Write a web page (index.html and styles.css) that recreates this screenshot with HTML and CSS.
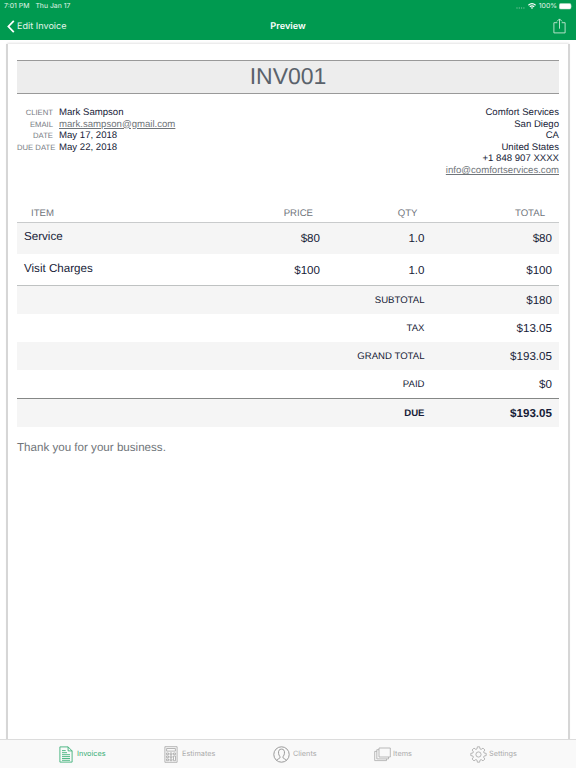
FILE: index.html
```html
<!DOCTYPE html>
<html lang="en">
<head>
<meta charset="utf-8">
<title>Preview</title>
<link rel="stylesheet" href="styles.css">
</head>
<body>
<header class="top">
  <div class="status">
    <div class="status-left"><span class="time">7:01 PM</span><span class="day">Thu Jan 17</span></div>
    <div class="status-right">
      <svg class="dots" width="9" height="2" viewBox="0 0 9 2" fill="#6dc298"><circle cx="1" cy="1" r=".65"/><circle cx="3.3" cy="1" r=".65"/><circle cx="5.6" cy="1" r=".65"/><circle cx="7.9" cy="1" r=".65"/></svg>
      <svg class="wifi" width="8" height="6" viewBox="0 0 8 6" fill="none" stroke="#fff" stroke-width="1.2"><path d="M.4 2.3Q4-.9 7.6 2.3M1.8 3.8Q4 1.9 6.2 3.8"/><path d="M2.8 4.7Q4 3.8 5.2 4.7L4 6z" fill="#fff" stroke="none"/></svg>
      <span class="percent">100%</span>
      <svg class="battery" width="14" height="7" viewBox="0 0 14 7"><rect x=".3" y=".5" width="11.7" height="5.6" rx="1.4" fill="#fff" stroke="#a9dcc1" stroke-width=".5"/><path d="M12.7 2.3q1 1 0 2z" fill="#a9dcc1"/></svg>
    </div>
  </div>
  <nav class="nav">
    <a class="back"><svg width="8" height="13" viewBox="0 0 8 13" fill="none" stroke="#fff" stroke-width="1.8"><path d="M6.8.8 1.4 6.5l5.4 5.7"/></svg><span>Edit Invoice</span></a>
    <h1>Preview</h1>
    <svg class="share" width="13" height="16" viewBox="0 0 13 16" fill="none" stroke="#c5e8d4" stroke-width=".9"><path d="M4.3 4.7H.9v10.2h11.2V4.7H8.7M6.5 10.7V1M4 3.4 6.5.9 9 3.4"/></svg>
  </nav>
</header>

<main class="page">
  <article class="paper">
    <h2 class="number">INV001</h2>
    <section class="info">
      <dl class="client">
        <dt>CLIENT</dt><dd>Mark Sampson</dd>
        <dt>EMAIL</dt><dd><a>mark.sampson@gmail.com</a></dd>
        <dt>DATE</dt><dd>May 17, 2018</dd>
        <dt class="wide">DUE DATE</dt><dd>May 22, 2018</dd>
      </dl>
      <address class="company">
        <div>Comfort Services</div><div>San Diego</div><div>CA</div><div>United States</div><div>+1 848 907 XXXX</div><div><a>info@comfortservices.com</a></div>
      </address>
    </section>
    <section class="items">
      <div class="row head"><span>ITEM</span><span>PRICE</span><span>QTY</span><span>TOTAL</span></div>
      <div class="row shade"><span class="name">Service</span><span>$80</span><span>1.0</span><span>$80</span></div>
      <div class="row last"><span class="name">Visit Charges</span><span>$100</span><span>1.0</span><span>$100</span></div>
    </section>
    <section class="totals">
      <div class="sum shade"><span class="label">SUBTOTAL</span><span>$180</span></div>
      <div class="sum"><span class="label">TAX</span><span>$13.05</span></div>
      <div class="sum shade"><span class="label">GRAND TOTAL</span><span>$193.05</span></div>
      <div class="sum"><span class="label">PAID</span><span>$0</span></div>
      <div class="sum shade due"><span class="label">DUE</span><span>$193.05</span></div>
    </section>
    <p class="note">Thank you for your business.</p>
  </article>
</main>

<footer class="tabs">
  <a class="tab active"><svg width="14" height="17" viewBox="0 0 14 17" fill="none" stroke="currentColor" stroke-width=".85"><path d="M.9.9h8.2l4 4v11.2H.9zM9.1.9v4h4M3 4.6h3.7M3 6.7h5M3 8.7h8M3 10.6h8M3 12.5h8M3 14.3h8"/></svg><span>Invoices</span></a>
  <a class="tab"><svg width="14" height="17" viewBox="0 0 14 17" fill="none" stroke="currentColor" stroke-width=".85"><path d="M.9.7h12.2v15.6H.9zM2.6 2.5h8.8v2.6H2.6zM2.5 7h2v1.7h-2zM6 7h2v1.7H6zM9.5 7h2v1.7h-2zM2.5 10h2v1.7h-2zM6 10h2v1.7H6zM9.5 10h2v4.7h-2zM2.5 13h2v1.7h-2zM6 13h2v1.7H6z"/></svg><span>Estimates</span></a>
  <a class="tab clients"><svg width="17" height="17" viewBox="0 0 17 17" fill="none" stroke="#8e8e8e" stroke-width=".9"><circle cx="8.5" cy="8.5" r="7.7"/><path d="M3.7 14.3c.5-1.5 3.4-1.4 3.4-3.1 0-.8-1.2-1.5-1.5-3.6C5.2 4.7 6.2 3.1 8.5 3.1s3.3 1.6 2.9 4.5c-.3 2.1-1.5 2.8-1.5 3.6 0 1.7 2.9 1.6 3.4 3.1"/></svg><span>Clients</span></a>
  <a class="tab tight"><svg width="17" height="15" viewBox="0 0 17 15" fill="none" stroke="currentColor" stroke-width=".8"><path d="M5 1h11.3v9H5zM5 2.7H2.8v9.2h11.7V10M2.8 4.4H.7v9.2h11.8v-1.7"/></svg><span>Items</span></a>
  <a class="tab tight"><svg width="17" height="17" viewBox="0 0 17 17" fill="none" stroke="currentColor" stroke-width=".85" stroke-linejoin="round"><circle cx="8.5" cy="8.5" r="2.6"/><path d="M7.4.8h2.2l.4 2.1 1.2.5L13 2.1 14.9 4l-1.3 1.8.5 1.2 2.1.4v2.2l-2.1.4-.5 1.2 1.3 1.8-1.9 1.9-1.8-1.3-1.2.5-.4 2.1H7.4L7 14.1l-1.2-.5L4 14.9 2.1 13l1.3-1.8-.5-1.2-2.1-.4V7.4L2.9 7l.5-1.2L2.1 4 4 2.1l1.8 1.3L7 2.9z"/></svg><span>Settings</span></a>
</footer>
</body>
</html>
```
FILE: styles.css
```css
* { box-sizing: border-box; margin: 0; padding: 0; }
body { width: 576px; height: 768px; display: flex; flex-direction: column; overflow: hidden; background: #fff; font-family: "Liberation Sans", Arial, sans-serif; color: #171c38; text-rendering: geometricPrecision; }
svg { display: block; flex: none; }

.top { height: 40px; background: #009a50; color: #fff; font-family: Inter, sans-serif; }
.status { height: 12px; display: flex; justify-content: space-between; padding: 0 3px 0 4px; font-size: 6.9px; line-height: 12px; color: #e4f5eb; }
.status-left { display: flex; gap: 6px; }
.status-right { display: flex; align-items: center; }
.dots { margin: 4px 3px 0 0; }
.wifi { margin-right: 3px; }
.percent { margin-right: 2px; }
.nav { height: 28px; display: grid; grid-template-columns: 1fr auto 1fr; align-items: center; padding: 0 9px 0 10px; }
.back { display: flex; align-items: center; gap: 2px; margin-left: -3px; font-size: 9.1px; line-height: 12px; color: #e4f5eb; }
.back span { padding-top: 1px; }
.nav h1 { padding: 1px 1px 0 0; font-size: 9.2px; font-weight: 600; line-height: 12px; }
.share { justify-self: end; margin-right: 1px; }

.page { flex: 1; min-height: 0; padding: 4px 8px 0; overflow: hidden; }
.paper { height: 720px; padding: 16px 9px 0; background: #fff; box-shadow: -2px 0 0 #d6d6d6, 2px 0 0 #d6d6d6, 0 0 2px 1px #e4e4e4; }
.number { height: 34px; border-top: 1px solid #999; border-bottom: 1px solid #999; background: #ededed; color: #5a626b; font-size: 23px; font-weight: 400; line-height: 31px; text-align: center; }
.info { height: 110px; display: flex; justify-content: space-between; padding-top: 13px; font-size: 9.6px; line-height: 11.6px; }
.client { display: grid; grid-template-columns: 38px auto; grid-auto-rows: 11.6px; column-gap: 4px; align-content: start; }
.client dt { padding-right: 2px; font-size: 7.7px; color: #777b83; text-align: right; white-space: nowrap; line-height: 12.6px; }
.client .wide { padding-right: 0; }
.info a { color: #70757a; text-decoration: underline; }
.company { font-style: normal; text-align: right; }

.row { height: 31px; display: grid; grid-template-columns: 210px 93px 104.5px 127.5px; align-items: center; font-size: 11.6px; text-align: right; }
.row .name { padding-left: 7px; margin-top: -4px; text-align: left; }
.head { height: 19px; border-bottom: 1px solid #c9cbcc; font-size: 9.6px; color: #70757c; }
.row.head span { padding-right: 7px; }
.row.head span:first-child { padding-left: 14px; text-align: left; }
.row.last { height: 32px; padding-top: 1px; border-bottom: 1px solid #bfc2c2; }
.shade { background: #f5f5f5; }
.sum { height: 28px; display: grid; grid-template-columns: 407.5px 127.5px; align-items: center; font-size: 11.6px; text-align: right; }
.label { font-size: 9.6px; }
.due { height: 29px; border-top: 1px solid #858786; font-weight: 700; }
.note { margin-top: 14px; font-size: 11.6px; line-height: 14px; color: #70757a; }

.tabs { height: 29px; display: grid; grid-template-columns: 105px 109px 101px 96px 60px; padding-left: 59px; border-top: 1px solid #dcdcdc; background: #f9f9f9; color: #aaa; font-family: Inter, sans-serif; font-size: 7.3px; }
.tab { display: flex; align-items: center; gap: 4px; }
.tab span { padding-bottom: 1px; }
.clients { gap: 3px; }
.tight { gap: 2px; }
.active { color: #35ad73; }
```
